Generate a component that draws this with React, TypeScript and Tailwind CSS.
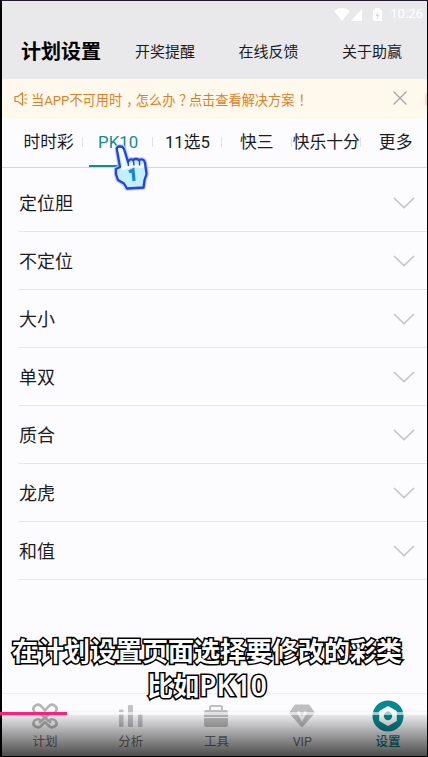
import { useState } from 'react';

const topLinks = ['开奖提醒', '在线反馈', '关于助赢'];
const tabs = ['时时彩', 'PK10', '11选5', '快三', '快乐十分', '更多'];
const rows = ['定位胆', '不定位', '大小', '单双', '质合', '龙虎', '和值'];

const navItems = [
  { label: '计划', icon: <PlanIcon /> },
  { label: '分析', icon: <ChartIcon /> },
  { label: '工具', icon: <ToolIcon /> },
  { label: 'VIP', icon: <VipIcon /> },
  { label: '设置', icon: <SettingsIcon /> },
];

function PlanIcon() {
  return (
    <svg width="28" height="28" viewBox="0 0 28 28" fill="none" stroke="#b4b4b6" strokeWidth="2.6" strokeLinecap="round">
      <path d="M14 8.500L10 4C7 1 1.500 4 2.500 8c.6 2.500 3.500 3.500 6 3L19 20" />
      <path d="M14 8.500l4-4.500C21 1 26.500 4 25.500 8c-.6 2.500-3.500 3.500-6 3L9 20" />
      <path d="M14 20l-4 4C7 27 1.500 24 2.500 20.500c.6-2.500 3.500-3.500 6-3" />
      <path d="M14 20l4 4c3 3 8.500 0 7.500-3.500-.6-2.500-3.500-3.500-6-3" />
    </svg>
  );
}

function ChartIcon() {
  return (
    <svg width="28" height="28" viewBox="0 0 28 28" fill="#c3c3c5">
      <rect x="2" y="12" width="4.500" height="13" rx="1" />
      <rect x="2" y="7.500" width="4.500" height="3" rx="1" />
      <rect x="11" y="3" width="5" height="22" rx="1" />
      <rect x="21" y="12" width="4.500" height="13" rx="1" />
    </svg>
  );
}

function ToolIcon() {
  return (
    <svg width="28" height="28" viewBox="0 0 28 28" fill="#bebec0">
      <path d="M8 8V5.500Q8 4 9.500 4h9Q20 4 20 5.500V8" fill="none" stroke="#bebec0" strokeWidth="2" />
      <path d="M4 8h20q2 0 2 2v5H2v-5q0-2 2-2z" />
      <path d="M2 16h24v7q0 2-2 2H4q-2 0-2-2z" />
    </svg>
  );
}

function VipIcon() {
  return (
    <svg width="28" height="28" viewBox="0 0 28 28">
      <path d="M7 3h14l5.500 8L14 25 1.500 11z" fill="#bebec0" stroke="#bebec0" strokeLinejoin="round" />
      <path d="M10 9.500l4 7.500 4-7.500" fill="none" stroke="#f7f7f8" strokeWidth="2.600" />
    </svg>
  );
}

function SettingsIcon() {
  return (
    <svg width="32" height="32" viewBox="0 0 32 32">
      <circle cx="16" cy="16" r="15.500" fill="#078790" />
      <path d="M16 7l7.800 4.500v9L16 25l-7.800-4.500v-9z" fill="#fbfbfc" stroke="#fbfbfc" strokeWidth="2" strokeLinejoin="round" />
      <circle cx="16" cy="16" r="4.200" fill="#078790" />
    </svg>
  );
}

function StatusBar() {
  return (
    <div className="flex h-[25px] items-center justify-end pr-[4px] text-white">
      <svg width="54" height="16" viewBox="0 0 54 16" fill="currentColor">
        <path d="M0 5q8-6 16 0L8 15z" />
        <path d="M28 3v12H17z" />
        <path d="M39 4h2V2h5v2h2v11h-9z" />
        <path d="M44.500 5l-3 5h2l-1 4 3-5h-2z" fill="#d5d5d8" />
      </svg>
      <span className="ml-[2px] text-[13.200px]">10:26</span>
    </div>
  );
}

function Pointer() {
  return (
    <svg className="absolute left-[29px] top-[23px] z-10" width="38" height="50" viewBox="0 0 38 50">
      <path
        d="M5 8Q4 4.500 8 4.500q3.500 0 4.500 4L16 20q2-4 5-2 3-2 6 0 5-2 6 3l1.500 11-2 6-1 7.500-16.500 1-3-5-6-3.500L4 32v-5l4-2z"
        fill="none"
        stroke="#b9c4ff"
        strokeWidth="4.500"
        strokeLinejoin="round"
      />
      <path
        d="M5 8Q4 4.500 8 4.500q3.500 0 4.500 4L16 20q2-4 5-2 3-2 6 0 5-2 6 3l1.500 11-2 6-1 7.500-16.500 1-3-5-6-3.500L4 32v-5l4-2z"
        fill="#c4efff"
        stroke="#2445d8"
        strokeWidth="2.300"
        strokeLinejoin="round"
      />
      <path d="M8.500 8l4 17M11 26l9-3 10 1" fill="none" stroke="#f5fcff" strokeWidth="4" strokeLinecap="round" />
      <path d="M16 20l.5 4M21.500 19l.5 4.500M27.500 19v4.500" fill="none" stroke="#2445d8" strokeWidth="1.500" />
      <path d="M17 30l4-2 1 11" fill="none" stroke="#1685dc" strokeWidth="3.200" />
    </svg>
  );
}

export default function App() {
  const [active, setActive] = useState('PK10');

  return (
    <div className="relative flex h-[757px] w-[428px] flex-col overflow-hidden border-y border-l-2 border-r border-black border-t-[#211a2b] bg-[#fcfcfe] font-[Roboto,'Noto_Sans_CJK_SC',sans-serif] text-[#1c1c1e]">
      <header className="h-[78px] shrink-0 bg-[#e9e9eb]">
        <StatusBar />
        <div className="flex h-[52px] items-center pl-[19px] whitespace-nowrap">
          <h1 className="w-[114px] shrink-0 text-[20px] font-bold text-black">计划设置</h1>
          {topLinks.map((link) => (
            <a key={link} className="w-[103.500px] shrink-0 text-[15px]">{link}</a>
          ))}
        </div>
      </header>

      <div className="flex h-[40px] shrink-0 items-center bg-[#fff8ec] pl-[12px] text-[#d9822b]">
        <svg width="14" height="14" viewBox="0 0 14 14" fill="none" stroke="currentColor" strokeWidth="1.200">
          <path d="M1 4.500h3L8.500 1v12L4 9.500H1zM10.500 3.500l2-1M10.500 7h3M10.500 10.500l2 1" />
        </svg>
        <p className="ml-[3px] flex-1 pt-[3px] text-[13.200px] whitespace-nowrap">
          当APP不可用时<span className="pr-[3px] pl-[4px] [font-feature-settings:'halt']">，</span>怎么办<span className="pr-[3px] pl-[4px] [font-feature-settings:'halt']">？</span>点击查看解决方案<span className="pl-[4px] [font-feature-settings:'halt']">！</span>
        </p>
        <svg className="mr-[17px] mb-[3px]" width="16" height="16" viewBox="0 0 16 16" stroke="#aaa8a6" strokeWidth="1.400">
          <path d="M1.500 1.500l13 13M14.500 1.500l-13 13" />
        </svg>
        <span className="h-[11px] w-[2px] bg-[#ffdf91]" />
      </div>

      <nav className="flex h-[49px] shrink-0 border-b border-[#d4d4d6] pl-[12px]">
        {tabs.map((tab) => (
          <button
            key={tab}
            onClick={() => setActive(tab)}
            className={`relative flex w-[69.400px] shrink-0 items-center justify-center text-[16.800px] whitespace-nowrap ${
              tab === active ? 'text-[#118c8c]' : ''
            }`}
          >
            {tab}
            {tab !== '更多' && <span className="absolute top-[18px] right-0 h-[10px] w-px bg-[#e3e3e6]" />}
            {tab === active && (
              <>
                <span className="absolute bottom-0 left-[6px] h-[2px] w-[58px] bg-[#118c8c]" />
                <Pointer />
              </>
            )}
          </button>
        ))}
      </nav>

      <ul className="flex-1 pt-[6px] pl-[17px]">
        {rows.map((row) => (
          <li key={row} className="flex h-[58px] items-center justify-between border-b border-[#e6e6e9] pr-[12px] text-[18px]">
            <span className="pt-[2px]">{row}</span>
            <svg width="22" height="12" viewBox="0 0 22 12" fill="none" stroke="#c6c6ca" strokeWidth="1.700">
              <path d="M1 1l10 9.500L21 1" />
            </svg>
          </li>
        ))}
      </ul>

      <footer className="flex h-[63px] w-[429px] shrink-0 border-t border-[#efeff1] text-[12.500px] text-[#77777a]">
        {navItems.map((item) => (
          <div key={item.label} className="flex flex-1 flex-col items-center">
            <div className="mt-[6px] flex h-[32px] items-center">{item.icon}</div>
            <span className={`mt-px leading-[18px] ${item.label === '设置' ? 'font-medium text-[#078790]' : ''}`}>{item.label}</span>
          </div>
        ))}
      </footer>

      <div className="pointer-events-none absolute inset-x-0 bottom-0 h-[46px] bg-linear-to-b from-transparent to-black/70" />
      <div className="absolute right-0 bottom-[41px] left-0 h-[3px] bg-white/60" />
      {/* played part starts on the outer edge, over the frame */}
      <div className="fixed top-[712px] left-0 h-[3px] w-[67px] bg-[#ff1f78]" />

      <p className="absolute top-[633px] -left-[9px] w-[428px] text-center font-['Noto_Sans','Noto_Sans_CJK_SC',sans-serif] text-[26px] leading-[35px] font-bold whitespace-nowrap text-white [-webkit-text-stroke:3.200px_#000] [paint-order:stroke_fill]">
        在计划设置页面选择要修改的彩类
        <br />
        比如<span className="text-[28px] leading-none font-semibold">PK10</span>
      </p>
    </div>
  );
}
